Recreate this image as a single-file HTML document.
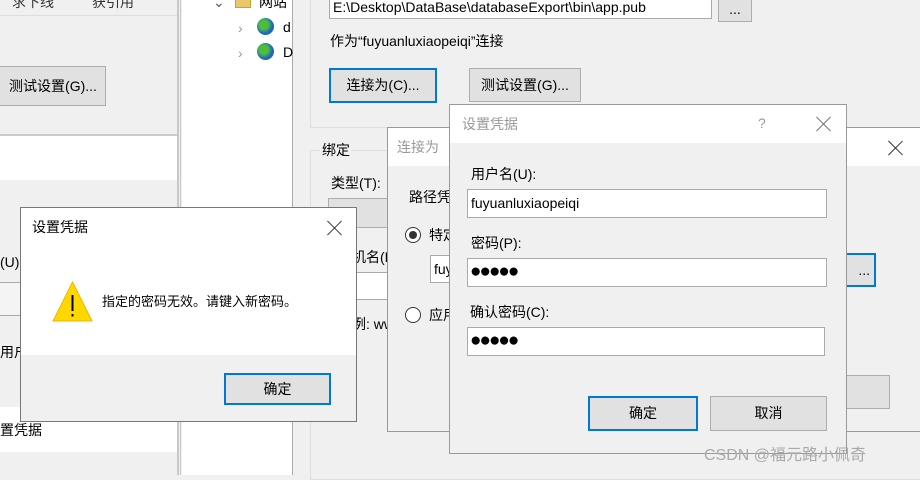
<!DOCTYPE html>
<html><head><meta charset="utf-8"><style>
*{box-sizing:border-box;margin:0;padding:0}
body{width:920px;height:475px;overflow:hidden;background:#f0f0f0;position:relative;font-family:"Liberation Sans","Noto Sans CJK SC",sans-serif;font-size:14px;color:#000}
.a{position:absolute}
.t{position:absolute;white-space:nowrap;line-height:16px}
.btn{position:absolute;background:#e1e1e1;border:1px solid #adadad;text-align:center;font-size:14px}
.bb{border:2px solid #0078d7}
.in{position:absolute;background:#fff;border:1px solid #aaa;padding-left:3px;white-space:nowrap;overflow:hidden}
.dots{font-size:19px;letter-spacing:-2px;line-height:26px;padding-left:2px}
.x{position:absolute;width:16px;height:16px}
.x:before,.x:after{content:"";position:absolute;left:7px;top:-2px;width:1px;height:20px;background:#333;transform:rotate(45deg)}
.x:after{transform:rotate(-45deg)}
</style></head><body>
<!-- left panel -->
<div class="a" style="left:0;top:15px;width:178px;height:1px;background:#ddd"></div>
<div class="t" style="left:12px;top:-6px;color:#333">求下线</div>
<div class="t" style="left:92px;top:-6px;color:#333">获引用</div>
<div class="btn" style="left:-10px;top:66px;width:116px;height:40px;line-height:38px;padding-left:10px">测试设置(G)...</div>
<div class="a" style="left:0;top:134px;width:178px;height:2px;background:#ccc"></div>
<div class="a" style="left:0;top:136px;width:178px;height:44px;background:#fff"></div>
<div class="t" style="left:0;top:254px">(U)</div>
<div class="a" style="left:0;top:282px;width:178px;height:1px;background:#aaa"></div>
<div class="a" style="left:0;top:283px;width:178px;height:32px;background:#f4f4f4"></div>
<div class="a" style="left:0;top:315px;width:178px;height:1px;background:#aaa"></div>
<div class="t" style="left:0;top:344px">用户</div>
<div class="a" style="left:0;top:407px;width:178px;height:45px;background:#fff"></div>
<div class="t" style="left:0;top:422px">置凭据</div>
<div class="a" style="left:177px;top:0;width:2px;height:475px;background:#c8c8c8"></div>
<div class="a" style="left:180px;top:0;width:1px;height:475px;background:#c8c8c8"></div>
<!-- tree -->
<div class="a" style="left:182px;top:0;width:110px;height:475px;background:#fff"></div>
<div class="a" style="left:292px;top:0;width:1px;height:475px;background:#aaa"></div>
<div class="t" style="left:213px;top:-6px;color:#555">⌄</div>
<div class="a" style="left:235px;top:-4px;width:16px;height:12px;background:#e8c868;border:1px solid #c9a040"></div>
<div class="t" style="left:259px;top:-6px">网站</div>
<div class="t" style="left:238px;top:20px;color:#999">›</div>
<div class="a" style="left:257px;top:18px;width:17px;height:17px;border-radius:50%;background:radial-gradient(circle at 40% 40%,#4cbf3a 30%,#1f64c8 60%)"></div>
<div class="t" style="left:283px;top:19px">d</div>
<div class="t" style="left:238px;top:45px;color:#999">›</div>
<div class="a" style="left:257px;top:43px;width:17px;height:17px;border-radius:50%;background:radial-gradient(circle at 40% 40%,#4cbf3a 30%,#1f64c8 60%)"></div>
<div class="t" style="left:283px;top:44px">D</div>
<!-- right panel -->
<div class="a" style="left:310px;top:-2px;width:620px;height:130px;border:1px solid #ddd"></div>
<div class="in" style="left:329px;top:-4px;width:383px;height:23px;line-height:20px">E:\Desktop\DataBase\databaseExport\bin\app.pub</div>
<div class="btn" style="left:718px;top:-2px;width:34px;height:24px;line-height:20px">...</div>
<div class="t" style="left:330px;top:33px">作为“fuyuanluxiaopeiqi”连接</div>
<div class="btn bb" style="left:329px;top:68px;width:108px;height:35px;line-height:31px">连接为(C)...</div>
<div class="btn" style="left:469px;top:68px;width:112px;height:34px;line-height:32px">测试设置(G)...</div>
<div class="a" style="left:310px;top:150px;width:620px;height:330px;border:1px solid #ddd"></div>
<div class="t" style="left:320px;top:142px;background:#f0f0f0;padding:0 2px">绑定</div>
<div class="t" style="left:331px;top:175px">类型(T):</div>
<div class="a" style="left:328px;top:198px;width:60px;height:30px;background:#e1e1e1;border:1px solid #adadad"></div>
<div class="t" style="left:352px;top:249px">机名(H</div>
<div class="a" style="left:352px;top:272px;width:40px;height:28px;background:#fff;border:1px solid #aaa"></div>
<div class="t" style="left:352px;top:316px">例: ww</div>
<!-- connect-as dialog -->
<div class="a" style="left:387px;top:127px;width:545px;height:305px;background:#f0f0f0;border:1px solid #999"></div>
<div class="a" style="left:388px;top:128px;width:540px;height:38px;background:#fff"></div>
<div class="t" style="left:397px;top:139px;color:#999">连接为</div>
<div class="x" style="left:888px;top:140px"></div>
<div class="t" style="left:409px;top:189px">路径凭</div>
<div class="a" style="left:405px;top:227px;width:16px;height:16px;border:1px solid #333;border-radius:50%;background:#fff"><div class="a" style="left:3px;top:3px;width:8px;height:8px;border-radius:50%;background:#333"></div></div>
<div class="t" style="left:429px;top:227px">特定</div>
<div class="in" style="left:430px;top:255px;width:60px;height:28px;line-height:26px">fuy</div>
<div class="a" style="left:405px;top:307px;width:16px;height:16px;border:1px solid #333;border-radius:50%;background:#fff"></div>
<div class="t" style="left:429px;top:307px">应用</div>
<div class="btn bb" style="left:830px;top:253px;width:46px;height:34px;line-height:30px;text-align:right;padding-right:4px">...</div>
<div class="btn" style="left:830px;top:375px;width:60px;height:34px"></div>
<!-- credentials dialog -->
<div class="a" style="left:449px;top:104px;width:398px;height:350px;background:#f0f0f0;border:1px solid #999"></div>
<div class="a" style="left:450px;top:105px;width:396px;height:38px;background:#fff"></div>
<div class="t" style="left:462px;top:116px;color:#999">设置凭据</div>
<div class="t" style="left:758px;top:115px;color:#999">?</div>
<div class="x" style="left:816px;top:116px;opacity:.7"></div>
<div class="t" style="left:471px;top:166px">用户名(U):</div>
<div class="in" style="left:467px;top:189px;width:360px;height:29px;line-height:27px">fuyuanluxiaopeiqi</div>
<div class="t" style="left:471px;top:235px">密码(P):</div>
<div class="in dots" style="left:467px;top:258px;width:360px;height:29px">●●●●●</div>
<div class="t" style="left:470px;top:304px">确认密码(C):</div>
<div class="in dots" style="left:467px;top:327px;width:358px;height:29px">●●●●●</div>
<div class="btn bb" style="left:588px;top:396px;width:110px;height:35px;line-height:31px">确定</div>
<div class="btn" style="left:710px;top:396px;width:117px;height:35px;line-height:33px">取消</div>
<!-- error dialog -->
<div class="a" style="left:20px;top:207px;width:337px;height:215px;background:#f0f0f0;border:1px solid #777"></div>
<div class="a" style="left:21px;top:208px;width:335px;height:147px;background:#fff"></div>
<div class="t" style="left:32px;top:219px">设置凭据</div>
<div class="x" style="left:327px;top:220px"></div>
<svg class="a" style="left:52px;top:281px" width="41" height="41" viewBox="0 0 41 41"><polygon points="20.5,1 40,40 1,40" fill="#ffd800" stroke="#f0b400" stroke-width="1"/><rect x="19.5" y="14" width="2" height="16" fill="#000"/><rect x="19.5" y="33" width="2" height="2.5" fill="#000"/></svg>
<div class="t" style="left:102px;top:294px;font-size:13px">指定的密码无效。请键入新密码。</div>
<div class="btn bb" style="left:224px;top:373px;width:107px;height:32px;line-height:28px">确定</div>
<div class="t" style="left:704px;top:446px;color:#aaa;font-size:16px;line-height:20px">CSDN @福元路小佩奇</div>
</body></html>
